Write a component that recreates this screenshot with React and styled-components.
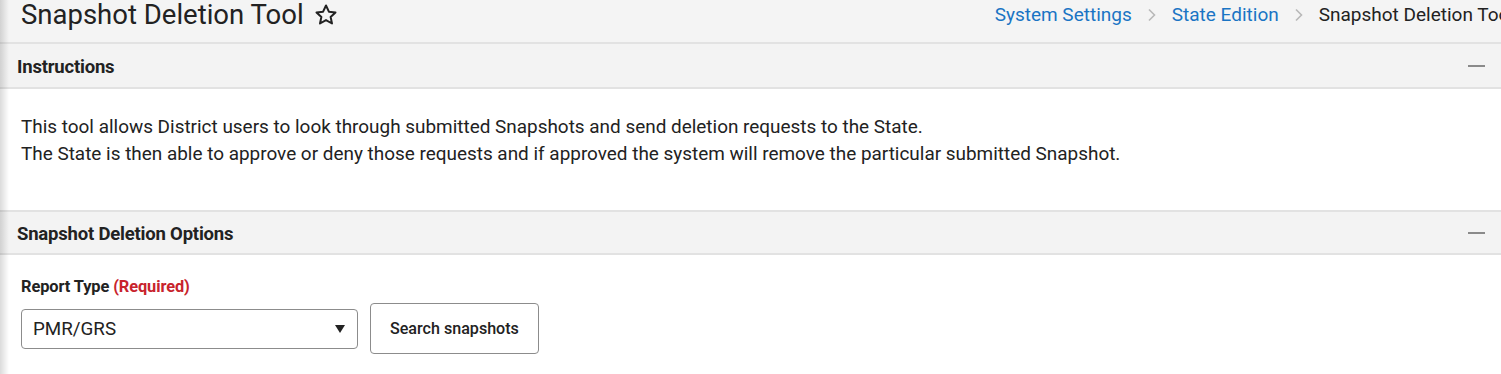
import React from "react";
import styled, { createGlobalStyle } from "styled-components";

const Global = createGlobalStyle`
  html, body { margin: 0; padding: 0; background: #fff; }
  body { font-family: Roboto, "Liberation Sans", Arial, sans-serif; color: #1f1f1f; }
  * { box-sizing: border-box; }
`;

const Page = styled.div`
  position: relative;
  width: 1501px;
  height: 374px;
  overflow: hidden;
  background: #fff;
  &::before {
    content: "";
    position: absolute;
    left: 0; top: 0; bottom: 0;
    width: 9px;
    background: linear-gradient(to right, rgba(0,0,0,0.14), rgba(0,0,0,0));
    z-index: 5;
    pointer-events: none;
  }
`;

const Header = styled.header`
  display: flex;
  align-items: center;
  justify-content: space-between;
  height: 44px;
  background: #f4f4f4;
  border-bottom: 2px solid #e2e2e2;
  padding: 0 0 0 21px;
  white-space: nowrap;
`;

const TitleWrap = styled.div`
  display: flex;
  align-items: center;
  gap: 10px;
  margin-top: -12px;
`;

const Title = styled.h1`
  margin: 0;
  font-size: 27.5px;
  line-height: 32px;
  font-weight: 400;
  color: #222;
`;

const Crumbs = styled.nav`
  display: flex;
  align-items: center;
  margin-top: -13px;
  margin-right: -13px;
  font-size: 19px;
`;

const Crumb = styled.span`
  color: ${(p) => (p.$current ? "#222" : "#1a74c4")};
`;

const Chevron = styled.span`
  display: inline-flex;
  width: 40px;
  justify-content: center;
  color: #b8b8b8;
`;

const SectionHead = styled.div`
  display: flex;
  align-items: center;
  justify-content: space-between;
  height: 45px;
  background: #f3f3f3;
  border-bottom: 2px solid #e2e2e2;
  border-top: ${(p) => (p.$top ? "2px solid #e2e2e2" : "none")};
  padding: 2px 16px 0 17px;
`;

const SectionTitle = styled.h2`
  margin: 0;
  font-size: 18.5px;
  line-height: 22px;
  font-weight: 700;
  color: #222;
  letter-spacing: -0.2px;
`;

const Minus = styled.span`
  display: block;
  width: 17px;
  height: 2px;
  margin-top: -2px;
  background: #8a8a8a;
`;

const Body = styled.div`
  padding: ${(p) => p.$pad};
`;

const Para = styled.p`
  margin: 0;
  font-size: 18.93px;
  line-height: 27px;
  color: #222;
`;

const Label = styled.div`
  font-size: 16.4px;
  line-height: 20px;
  font-weight: 700;
  color: #222;
  margin: 2px 0 6px;
  letter-spacing: -0.1px;
`;

const Req = styled.span`
  color: #c8232c;
`;

const Row = styled.div`
  display: flex;
  align-items: center;
  gap: 12px;
`;

const Select = styled.div`
  display: flex;
  align-items: center;
  justify-content: space-between;
  width: 337px;
  height: 40px;
  border: 1px solid #8c8c8c;
  border-radius: 4px;
  padding: 0 12px 0 11px;
  font-size: 18.8px;
  color: #222;
  margin-top: 1px;
`;

const Arrow = styled.span`
  width: 0;
  height: 0;
  border-left: 5px solid transparent;
  border-right: 5px solid transparent;
  border-top: 8px solid #222;
`;

const Button = styled.button`
  height: 51px;
  padding: 0 19px;
  border: 1px solid #8c8c8c;
  border-radius: 4px;
  background: #fff;
  font-family: Roboto, "Liberation Sans", Arial, sans-serif;
  font-size: 16.1px;
  font-weight: 500;
  color: #222;
`;

const Star = () => (
  <svg width="24" height="24" viewBox="0 0 24 24" fill="none" stroke="#222" strokeWidth="2" strokeLinejoin="round">
    <path d="M12 2.5l2.9 6.2 6.6.7-4.9 4.5 1.4 6.6L12 17.1l-6 3.4 1.4-6.6-4.9-4.5 6.6-.7z" />
  </svg>
);

const ChevronIcon = () => (
  <svg width="10" height="14" viewBox="0 0 10 14" fill="none" stroke="#b8b8b8" strokeWidth="1.6">
    <path d="M2 1.5l5.5 5.5L2 12.5" />
  </svg>
);

export default function App() {
  return (
    <Page>
      <Global />
      <Header>
        <TitleWrap>
          <Title>Snapshot Deletion Tool</Title>
          <Star />
        </TitleWrap>
        <Crumbs>
          <Crumb>System Settings</Crumb>
          <Chevron><ChevronIcon /></Chevron>
          <Crumb>State Edition</Crumb>
          <Chevron><ChevronIcon /></Chevron>
          <Crumb $current>Snapshot Deletion Tool</Crumb>
        </Crumbs>
      </Header>
      <SectionHead>
        <SectionTitle>Instructions</SectionTitle>
        <Minus />
      </SectionHead>
      <Body $pad="24px 21px 43px">
        <Para>This tool allows District users to look through submitted Snapshots and send deletion requests to the State.</Para>
        <Para>The State is then able to approve or deny those requests and if approved the system will remove the particular submitted Snapshot.</Para>
      </Body>
      <SectionHead $top>
        <SectionTitle>Snapshot Deletion Options</SectionTitle>
        <Minus />
      </SectionHead>
      <Body $pad="20px 21px">
        <Label>Report Type <Req>(Required)</Req></Label>
        <Row>
          <Select>
            <span>PMR/GRS</span>
            <Arrow />
          </Select>
          <Button>Search snapshots</Button>
        </Row>
      </Body>
    </Page>
  );
}
